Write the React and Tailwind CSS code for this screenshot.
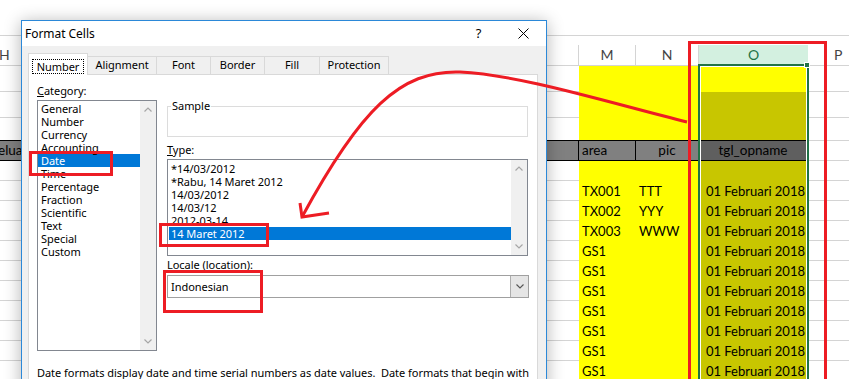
import React from 'react';

const categories = ['General', 'Number', 'Currency', 'Accounting', 'Date', 'Time', 'Percentage', 'Fraction', 'Scientific', 'Text', 'Special', 'Custom'];
const types = ['*14/03/2012', '*Rabu, 14 Maret 2012', '14/03/2012', '14/03/12', '2012-03-14', '14 Maret 2012'];
const tabs = [
  { name: 'Number', w: 'w-[60px]' },
  { name: 'Alignment', w: 'w-[69px]' },
  { name: 'Font', w: 'w-[54px]' },
  { name: 'Border', w: 'w-[54px]' },
  { name: 'Fill', w: 'w-[55px]' },
  { name: 'Protection', w: 'w-[69px]' },
];
const data = [
  ['TX001', 'TTT'], ['TX002', 'YYY'], ['TX003', 'WWW'],
  ['GS1', ''], ['GS1', ''], ['GS1', ''], ['GS1', ''], ['GS1', ''], ['GS1', ''], ['GS1', ''],
];

const COLS = 'grid grid-cols-[579px_57px_63px_109px_1fr]';

const Chevron = ({ up }) => (
  <svg width="8" height="5" viewBox="0 0 8 5">
    <path d={up ? 'M0.5 4.5 L4 1 L7.5 4.5' : 'M0.5 0.5 L4 4 L7.5 0.5'} stroke="#a6a6a6" strokeWidth="1.2" fill="none" />
  </svg>
);

const Scrollbar = () => (
  <div className="w-[16px] bg-[#f0f0f0] flex flex-col items-center justify-between py-[6px]">
    <Chevron up />
    <Chevron />
  </div>
);

// spreadsheet behind the dialog
const Sheet = () => {
  const white = 'bg-white border-b border-[#d4d4d4]';
  const yellow = 'bg-[#ffff00]';
  const olive = 'bg-[#c8c600]';
  return (
    <div className="flex flex-col font-['Lato',sans-serif] text-[13px] text-black">
      <div className="h-[36px] border-b border-[#d4d4d4]" />
      <div className="h-[9px]" />

      {/* column headers */}
      <div className={`${COLS} h-[21px] border-b border-[#d4d4d4] text-[#444] text-[14px] leading-[20px]`}>
        <div className="border-r border-[#d4d4d4] -ml-px">H</div>
        <div className="border-r border-[#d4d4d4] text-center">M</div>
        <div className="border-r border-[#d4d4d4] text-center">N</div>
        <div className="bg-[#d3f0e0] text-[#217346] text-center">O</div>
        <div className="pl-[26px]">P</div>
      </div>

      <div className={`${COLS} h-[26px]`}>
        <div className={white} />
        <div className={yellow} />
        <div className={yellow} />
        <div className={yellow} />
        <div className={white} />
      </div>
      <div className={`${COLS} h-[26px]`}>
        <div className={white} />
        <div className={yellow} />
        <div className={yellow} />
        <div className={olive} />
        <div className={white} />
      </div>
      <div className={`${COLS} h-[22px]`}>
        <div className="bg-white" />
        <div className={yellow} />
        <div className={yellow} />
        <div className={olive} />
        <div className="bg-white" />
      </div>

      {/* table header row */}
      <div className={`${COLS} h-[21px] leading-[19px] text-[13.5px]`}>
        <div className="bg-[#808080] border-y border-r border-black -ml-[2px]">elua</div>
        <div className="bg-[#808080] border-y border-r border-black pl-[3px]">area</div>
        <div className="bg-[#808080] border-y border-r border-black text-center">pic</div>
        <div className="bg-[#5f5f5f] border-y border-r border-black text-center">tgl_opname</div>
        <div className="bg-white border-y border-[#d4d4d4]" />
      </div>

      <div className={`${COLS} h-[20px]`}>
        <div className={white} />
        <div className={yellow} />
        <div className={yellow} />
        <div className={olive} />
        <div className={white} />
      </div>

      {data.map(([area, pic], i) => (
        <div key={i} className={`${COLS} h-[20px] leading-[20px]`}>
          <div className={white} />
          <div className={`${yellow} pl-[3px]`}>{area}</div>
          <div className={`${yellow} pl-[3px]`}>{pic}</div>
          <div className={`${olive} text-right pr-[3px]`}>01 Februari 2018</div>
          <div className={white} />
        </div>
      ))}
    </div>
  );
};

const FormatCells = () => (
  <div className="absolute left-[21px] top-[20px] w-[526px] h-[380px] border border-[#2b88d8] bg-[#f0f0f0] shadow-[0_2px_16px_rgba(0,0,0,0.3)] flex flex-col font-['Noto_Sans',sans-serif] text-[11px] tracking-[-0.04px] text-black">
    {/* title bar */}
    <div className="h-[25px] bg-white flex items-center">
      <span className="pl-[3px] text-[12px] flex-1">Format Cells</span>
      <div className="w-[45px] h-full flex items-center justify-center text-[13px]">?</div>
      <div className="w-[45px] h-full flex items-center justify-center">
        <svg width="11" height="11" viewBox="0 0 11 11">
          <path d="M0.5 0.5 L10.5 10.5 M10.5 0.5 L0.5 10.5" stroke="#000" strokeWidth="1" />
        </svg>
      </div>
    </div>

    <div className="flex-1 pl-[6px] pr-[8px] pt-[7px]">
      {/* tabs */}
      <div className="flex items-end h-[22px] relative z-10">
        {tabs.map((t, i) =>
          i === 0 ? (
            <div key={t.name} className={`${t.w} h-[22px] bg-white border-x border-t border-[#d9d9d9] flex items-end justify-center pb-[1px]`}>
              <span className="border border-dotted border-black px-[4px] leading-[13px]">{t.name}</span>
            </div>
          ) : (
            <div key={t.name} className={`${t.w} h-[19px] bg-[#f0f0f0] border-t border-r border-b border-[#d9d9d9] flex items-center justify-center`}>
              {t.name}
            </div>
          )
        )}
      </div>

      {/* panel */}
      <div className="-mt-px h-[320px] bg-white border border-[#d9d9d9] px-[8px]">
        <div className="flex gap-[10px]">
          <div className="w-[121px] pt-[8px]">
            <div className="leading-[16px]"><span className="underline">C</span>ategory:</div>
            <div className="mt-[1px] h-[251px] border border-[#828790] flex">
              <div className="flex-1 pt-[1px]">
                {categories.map((c) => (
                  <div key={c} className={`leading-[13px] pl-[3px] ${c === 'Date' ? 'bg-[#0078d7] text-white' : ''}`}>{c}</div>
                ))}
              </div>
              <Scrollbar />
            </div>
          </div>

          <div className="w-[362px]">
            <fieldset className="mt-[24px] h-[38px] w-[361px] border border-[#dcdcdc]">
              <legend className="ml-[3px] px-[1px] leading-[14px] text-[11px]">Sample</legend>
            </fieldset>
            <div className="mt-[5px] leading-[16px]"><span className="underline">T</span>ype:</div>
            <div className="mt-[1px] h-[97px] w-[361px] border border-[#828790] flex">
              <div className="flex-1 pt-[2px] pl-[1px]">
                {types.map((t) => (
                  <div key={t} className={`leading-[13px] pl-[2px] ${t === '14 Maret 2012' ? 'bg-[#0078d7] text-white' : ''}`}>{t}</div>
                ))}
              </div>
              <Scrollbar />
            </div>
            <div className="mt-[1px] leading-[16px]">Locale (location):</div>
            <div className="mt-[2px] h-[23px] w-[362px] border border-[#a0a0a0] flex">
              <div className="flex-1 pl-[3px] leading-[21px]">Indonesian</div>
              <div className="w-[18px] bg-[#e5e5e5] border-l border-[#adadad] flex items-center justify-center">
                <svg width="8" height="5" viewBox="0 0 8 5">
                  <path d="M0.5 0.5 L4 4 L7.5 0.5" stroke="#555" strokeWidth="1.1" fill="none" />
                </svg>
              </div>
            </div>
          </div>
        </div>
        <div className="mt-[14px] leading-[16px] whitespace-pre">Date formats display date and time serial numbers as date values.  Date formats that begin with</div>
      </div>
    </div>
  </div>
);

const App = () => (
  <div className="relative w-[849px] h-[379px] overflow-hidden bg-white">
    <Sheet />

    {/* selected column O */}
    <div className="absolute left-[698px] top-[64px] w-[111px] h-[330px] border-2 border-[#217346]">
      <div className="h-full border border-white" />
    </div>
    <div className="absolute left-[804px] top-[62px] w-[6px] h-[6px] bg-[#217346] border border-white" />

    <FormatCells />

    {/* red annotations */}
    <div className="absolute left-[688px] top-[41px] w-[139px] h-[360px] border-[3px] border-[#ed1c24]" />
    <div className="absolute left-[29px] top-[151px] w-[84px] h-[25px] border-[3px] border-[#ed1c24]" />
    <div className="absolute left-[159px] top-[223px] w-[110px] h-[24px] border-[3px] border-[#ed1c24]" />
    <div className="absolute left-[163px] top-[270px] w-[100px] h-[43px] border-[3px] border-[#ed1c24]" />

    <svg className="absolute inset-0 pointer-events-none" width="849" height="379" viewBox="0 0 849 379">
      <path d="M687 122 C600 100 520 75 460 72 C400 70 360 110 302 217" stroke="#ed1c24" strokeWidth="3" fill="none" />
      <path d="M300 203 L302 217 L329 213" stroke="#ed1c24" strokeWidth="3" fill="none" />
    </svg>
  </div>
);

export default App;
